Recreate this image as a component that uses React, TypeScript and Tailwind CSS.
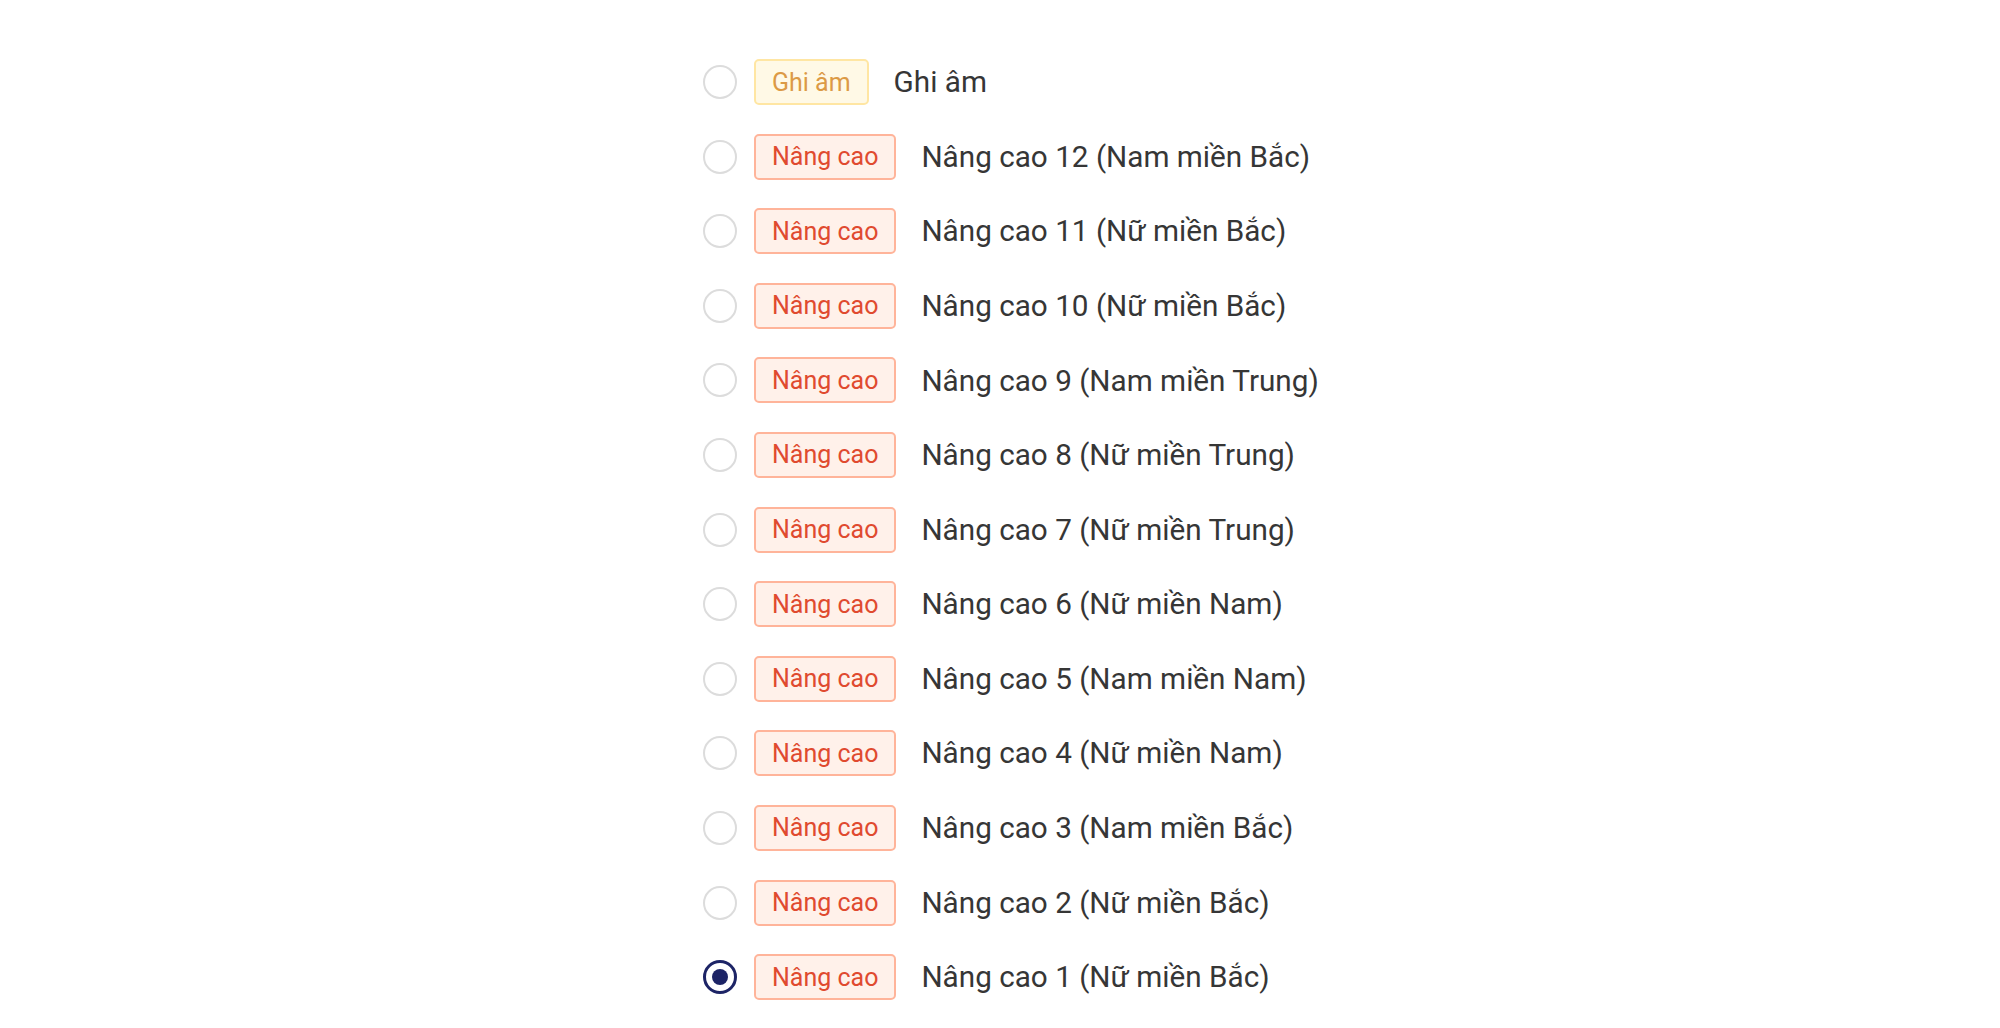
import { useState } from "react";

type Voice = { id: string; tag: "record" | "advanced"; name: string };

const VOICES: Voice[] = [
  { id: "rec", tag: "record", name: "Ghi âm" },
  { id: "a12", tag: "advanced", name: "Nâng cao 12 (Nam miền Bắc)" },
  { id: "a11", tag: "advanced", name: "Nâng cao 11 (Nữ miền Bắc)" },
  { id: "a10", tag: "advanced", name: "Nâng cao 10 (Nữ miền Bắc)" },
  { id: "a9", tag: "advanced", name: "Nâng cao 9 (Nam miền Trung)" },
  { id: "a8", tag: "advanced", name: "Nâng cao 8 (Nữ miền Trung)" },
  { id: "a7", tag: "advanced", name: "Nâng cao 7 (Nữ miền Trung)" },
  { id: "a6", tag: "advanced", name: "Nâng cao 6 (Nữ miền Nam)" },
  { id: "a5", tag: "advanced", name: "Nâng cao 5 (Nam miền Nam)" },
  { id: "a4", tag: "advanced", name: "Nâng cao 4 (Nữ miền Nam)" },
  { id: "a3", tag: "advanced", name: "Nâng cao 3 (Nam miền Bắc)" },
  { id: "a2", tag: "advanced", name: "Nâng cao 2 (Nữ miền Bắc)" },
  { id: "a1", tag: "advanced", name: "Nâng cao 1 (Nữ miền Bắc)" },
];

function Tag({ kind }: { kind: Voice["tag"] }) {
  if (kind === "record") {
    return (
      <span className="h-[46px] flex items-center px-4 rounded-[5px] border-2 border-[#ffe6a3] bg-[#fff9e6] text-[#dc9a45] text-[25px] leading-none">
        Ghi âm
      </span>
    );
  }
  return (
    <span className="h-[46px] flex items-center px-4 rounded-[5px] border-2 border-[#ffb49a] bg-[#fff1ea] text-[#e04a2f] text-[25px] leading-none">
      Nâng cao
    </span>
  );
}

export default function App() {
  const [selected, setSelected] = useState("a1");

  return (
    <div className="w-[2000px] h-[1028px] bg-white font-['Roboto','Noto_Sans',sans-serif] overflow-hidden">
      <div className="pl-[703px] pt-[59px] flex flex-col gap-[28.6px]">
        {VOICES.map((v) => {
          const on = v.id === selected;
          return (
            <label key={v.id} className="h-[46px] flex items-center cursor-pointer" onClick={() => setSelected(v.id)}>
              {on ? (
                <span className="w-[34px] h-[34px] rounded-full border-[3px] border-[#1d2466] flex items-center justify-center">
                  <span className="w-[16px] h-[16px] rounded-full bg-[#1d2466]" />
                </span>
              ) : (
                <span className="w-[34px] h-[34px] rounded-full border-2 border-[#dcdcdc] bg-white" />
              )}
              <span className="ml-[17px]">
                <Tag kind={v.tag} />
              </span>
              <span className="ml-[25px] text-[29.7px] text-[#363636] leading-none">{v.name}</span>
            </label>
          );
        })}
      </div>
    </div>
  );
}
